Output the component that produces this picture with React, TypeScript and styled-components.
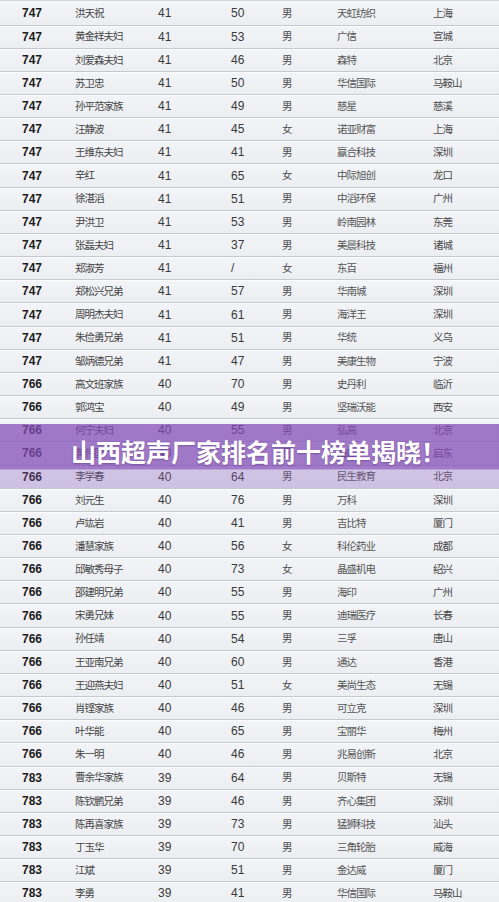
import styled, { createGlobalStyle } from "styled-components"

const GlobalStyle = createGlobalStyle`
  html, body {
    margin: 0;
    padding: 0;
    background: #eef0f4;
  }
  * {
    box-sizing: border-box;
  }
`

type Person = [string, string, string, string, string, string, string]

const rows: Person[] = [
  ["747", "洪天祝", "41", "50", "男", "天虹纺织", "上海"],
  ["747", "黄金祥夫妇", "41", "53", "男", "广信", "宣城"],
  ["747", "刘爱森夫妇", "41", "46", "男", "森特", "北京"],
  ["747", "苏卫忠", "41", "50", "男", "华信国际", "马鞍山"],
  ["747", "孙平范家族", "41", "49", "男", "慈星", "慈溪"],
  ["747", "汪静波", "41", "45", "女", "诺亚财富", "上海"],
  ["747", "王维东夫妇", "41", "41", "男", "赢合科技", "深圳"],
  ["747", "辛红", "41", "65", "女", "中际旭创", "龙口"],
  ["747", "徐湛滔", "41", "51", "男", "中滔环保", "广州"],
  ["747", "尹洪卫", "41", "53", "男", "岭南园林", "东莞"],
  ["747", "张磊夫妇", "41", "37", "男", "美晨科技", "诸城"],
  ["747", "郑淑芳", "41", "/", "女", "东百", "福州"],
  ["747", "郑松兴兄弟", "41", "57", "男", "华南城", "深圳"],
  ["747", "周明杰夫妇", "41", "61", "男", "海洋王", "深圳"],
  ["747", "朱俭勇兄弟", "41", "51", "男", "华统", "义乌"],
  ["747", "邹炳德兄弟", "41", "47", "男", "美康生物", "宁波"],
  ["766", "高文班家族", "40", "70", "男", "史丹利", "临沂"],
  ["766", "郭鸿宝", "40", "49", "男", "坚瑞沃能", "西安"],
  ["766", "何宁夫妇", "40", "55", "男", "弘高", "北京"],
  ["766", "黄伟国", "40", "52", "男", "海四达", "启东"],
  ["766", "李学春", "40", "64", "男", "民生教育", "北京"],
  ["766", "刘元生", "40", "76", "男", "万科", "深圳"],
  ["766", "卢竑岩", "40", "41", "男", "吉比特", "厦门"],
  ["766", "潘慧家族", "40", "56", "女", "科伦药业", "成都"],
  ["766", "邱敏秀母子", "40", "73", "女", "晶盛机电", "绍兴"],
  ["766", "邵建明兄弟", "40", "55", "男", "海印", "广州"],
  ["766", "宋勇兄妹", "40", "55", "男", "迪瑞医疗", "长春"],
  ["766", "孙任靖", "40", "54", "男", "三孚", "唐山"],
  ["766", "王亚南兄弟", "40", "60", "男", "通达", "香港"],
  ["766", "王迎燕夫妇", "40", "51", "女", "美尚生态", "无锡"],
  ["766", "肖铿家族", "40", "46", "男", "可立克", "深圳"],
  ["766", "叶华能", "40", "65", "男", "宝丽华", "梅州"],
  ["766", "朱一明", "40", "46", "男", "兆易创新", "北京"],
  ["783", "曹余华家族", "39", "64", "男", "贝斯特", "无锡"],
  ["783", "陈钦鹏兄弟", "39", "46", "男", "齐心集团", "深圳"],
  ["783", "陈再喜家族", "39", "73", "男", "猛狮科技", "汕头"],
  ["783", "丁玉华", "39", "70", "男", "三角轮胎", "威海"],
  ["783", "江斌", "39", "51", "男", "金达威", "厦门"],
  ["783", "李勇", "39", "41", "男", "华信国际", "马鞍山"],
]

const Page = styled.div`
  position: relative;
  width: 499px;
  height: 902px;
  overflow: hidden;
  padding-top: 1.4px;
  background: #eef0f4;
  border-top: 1px solid #d4d7de;
`

const Row = styled.div`
  display: grid;
  grid-template-columns: 75px 83px 73px 51px 55px 96px 1fr;
  align-items: center;
  height: 23.16px;
  background: linear-gradient(#f3f4f7, #eceef2);
  border-bottom: 1px solid #c4c8d1;
  box-shadow: inset 0 1px 0 #fbfcfd;
`

const Num = styled.span<{ bold?: boolean }>`
  padding-left: ${({ bold }) => (bold ? "22px" : "0")};
  font-family: "Liberation Sans", Arial, sans-serif;
  font-size: 12px;
  font-weight: ${({ bold }) => (bold ? 700 : 400)};
  color: ${({ bold }) => (bold ? "#1c1c1c" : "#3a3a3a")};
  line-height: 1;
`

const Cjk = styled.span<{ tone?: string }>`
  font-family: "Noto Sans CJK SC", sans-serif;
  font-size: 10.5px;
  letter-spacing: -1px;
  color: ${({ tone }) => tone || "#4a4a4a"};
  line-height: 1;
  white-space: nowrap;
`

const Banner = styled.div`
  position: absolute;
  top: 423px;
  left: 0;
  right: 0;
  height: 64px;
  display: flex;
  justify-content: center;
  padding-top: 13px;
  padding-left: 18px;
  background: linear-gradient(
    to bottom,
    rgba(128, 74, 182, 0.72) 0%,
    rgba(128, 74, 182, 0.72) 70%,
    rgba(140, 95, 190, 0.32) 72%,
    rgba(140, 95, 190, 0.32) 100%
  );
`

const Title = styled.h1`
  margin: 0;
  font-family: "Noto Sans CJK SC", sans-serif;
  font-size: 25px;
  font-weight: 700;
  line-height: 29px;
  color: #ffffff;
  white-space: nowrap;
  text-shadow: 0 1px 2px rgba(60, 20, 90, 0.35);
`

export default function App() {
  return (
    <>
      <GlobalStyle />
      <Page>
        {rows.map((r, i) => (
          <Row key={i}>
            <Num bold>{r[0]}</Num>
            <Cjk tone="#444">{r[1]}</Cjk>
            <Num>{r[2]}</Num>
            <Num>{r[3]}</Num>
            <Cjk>{r[4]}</Cjk>
            <Cjk tone="#555">{r[5]}</Cjk>
            <Cjk>{r[6]}</Cjk>
          </Row>
        ))}
        <Banner>
          <Title>山西超声厂家排名前十榜单揭晓！</Title>
        </Banner>
      </Page>
    </>
  )
}
